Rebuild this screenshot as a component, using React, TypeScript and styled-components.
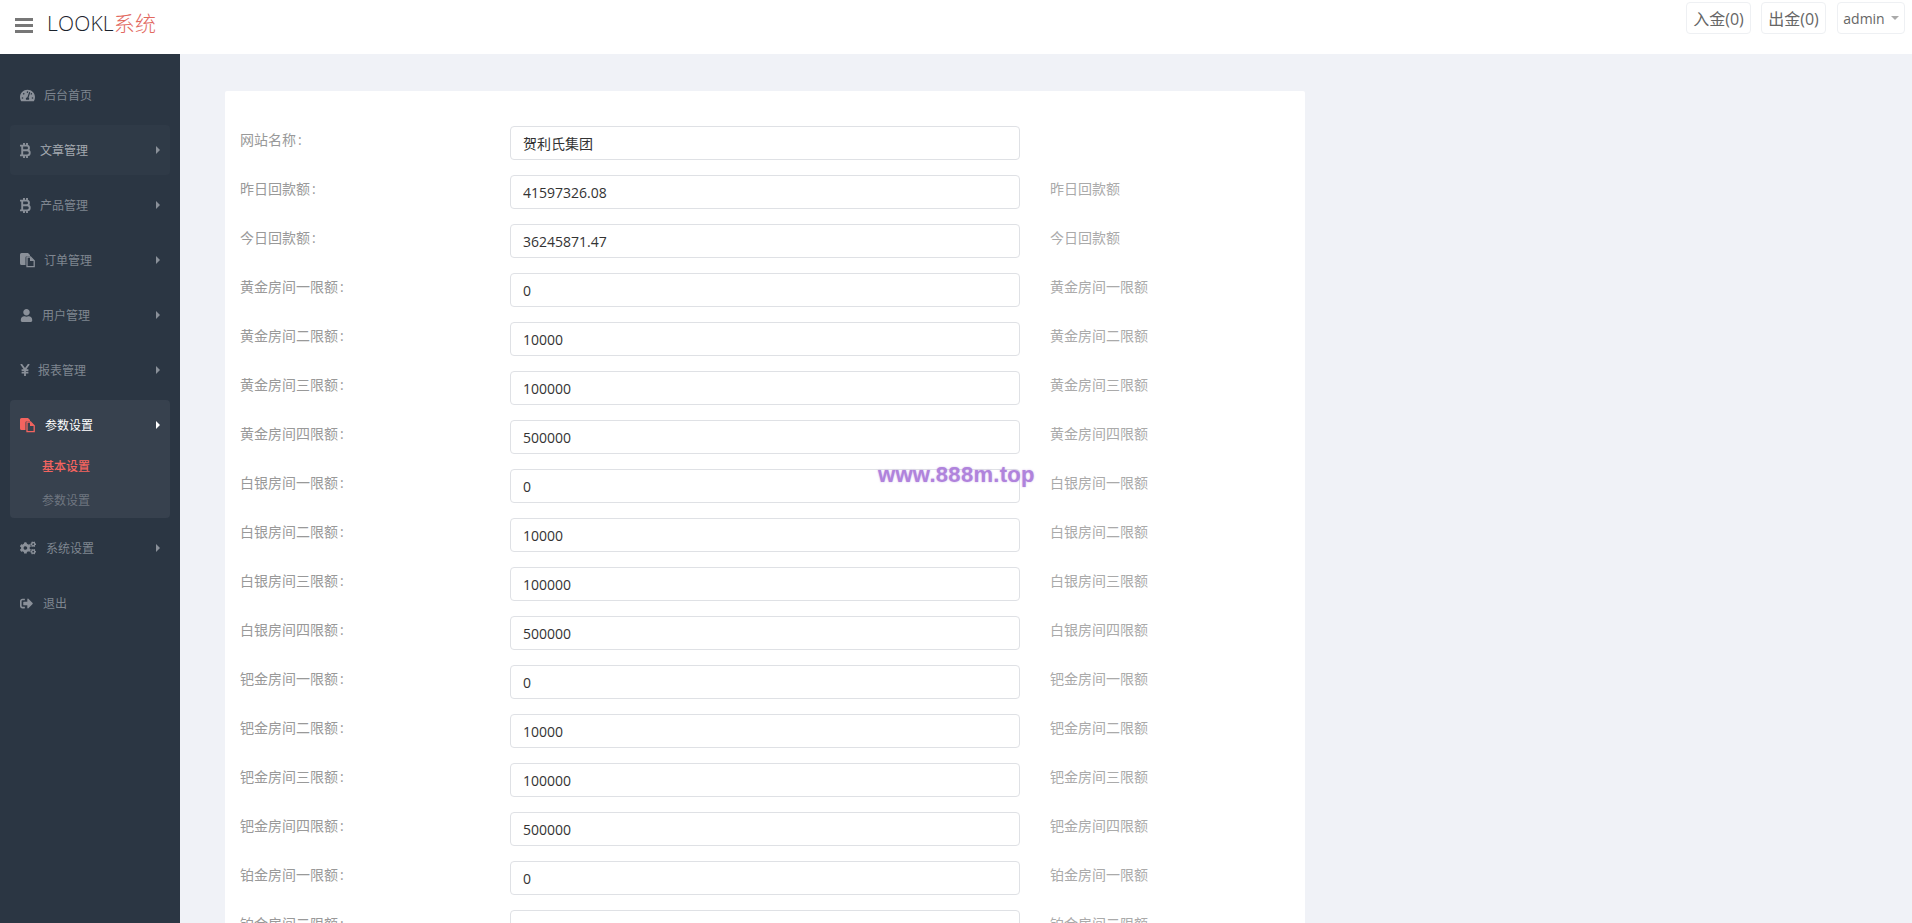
import React from 'react';
import styled, { createGlobalStyle } from 'styled-components';
import { FaCogs, FaSignOutAlt, FaTachometerAlt, FaUser } from 'react-icons/fa';

const GlobalStyle = createGlobalStyle`
  html, body {
    margin: 0;
    height: 100%;
    overflow: hidden;
  }
  body {
    font-family: "Open Sans", "Noto Sans CJK SC", sans-serif;
    background: #f0f2f7;
  }
`;

const Page = styled.div`
  position: relative;
  height: 100vh;
  display: flex;
  flex-direction: column;
  overflow: hidden;
`;

const Header = styled.header`
  flex: 0 0 54px;
  display: flex;
  align-items: flex-start;
  justify-content: space-between;
  background: #fff;
`;

const Brand = styled.div`
  display: flex;
  align-items: center;
  height: 44px;
  padding-left: 15px;
`;

const Burger = styled.svg`
  width: 18px;
  height: 15px;
  margin-right: 14px;
  margin-top: 6px;
`;

const Logo = styled.div`
  font-size: 21px;
  font-weight: 300;
  letter-spacing: 0.2px;
  color: #1a222c;
  span {
    color: #e2695f;
  }
`;

const HeaderActions = styled.div`
  display: flex;
  gap: 10px;
  padding: 2px 7px 0 0;
`;

const HeaderButton = styled.div`
  box-sizing: border-box;
  height: 32px;
  min-width: 65px;
  padding: 0 5px;
  display: flex;
  align-items: center;
  justify-content: center;
  gap: 6px;
  border: 1px solid #eef0f3;
  border-radius: 4px;
  font-size: 16px;
  color: #666;
`;

const AdminButton = styled(HeaderButton)`
  font-size: 14px;
  min-width: 68px;
  margin-left: 1px;
  &::after {
    content: '';
    border-left: 4px solid transparent;
    border-right: 4px solid transparent;
    border-top: 4px solid #aaa;
  }
`;

const Body = styled.div`
  flex: 1;
  min-height: 0;
  display: flex;
`;

const Sidebar = styled.nav`
  flex: 0 0 180px;
  box-sizing: border-box;
  padding: 16px 10px 0;
  background: #2b3643;
`;

const Group = styled.div<{ $open?: boolean; $hover?: boolean }>`
  margin-bottom: 5px;
  border-radius: 4px;
  background: ${(p) => (p.$open ? '#37414e' : p.$hover ? '#2f3a47' : 'transparent')};
`;

const NavItem = styled.div<{ $active?: boolean; $bright?: boolean }>`
  height: 50px;
  display: flex;
  align-items: center;
  padding: 0 10px;
  font-size: 12px;
  color: ${(p) => (p.$active ? '#fff' : p.$bright ? '#a4a9b0' : '#7f8690')};
`;

const NavIcon = styled.span<{ $active?: boolean; $gap: number; $width: number }>`
  display: flex;
  flex: 0 0 ${(p) => p.$width}px;
  min-width: 0;
  margin-right: ${(p) => p.$gap}px;
  color: ${(p) => (p.$active ? '#f4645f' : '#8a9099')};
  svg {
    width: 100%;
    height: auto;
  }
`;

const Arrow = styled.span<{ $active?: boolean }>`
  margin-left: auto;
  border-top: 4px solid transparent;
  border-bottom: 4px solid transparent;
  border-left: 4px solid ${(p) => (p.$active ? '#fff' : '#8a9099')};
`;

const SubMenu = styled.div`
  height: 68px;
  padding-left: 32px;
`;

const SubItem = styled.div<{ $active?: boolean }>`
  height: 34px;
  line-height: 34px;
  font-size: 12px;
  color: ${(p) => (p.$active ? '#f4645f' : '#6f7680')};
  font-weight: ${(p) => (p.$active ? 500 : 400)};
`;

const Main = styled.main`
  flex: 1;
  min-width: 0;
  padding: 37px 0 0 45px;
`;

const Card = styled.form`
  box-sizing: border-box;
  width: 1080px;
  padding: 35px 15px 0;
  background: #fff;
  border-radius: 2px;
`;

const Row = styled.div`
  display: flex;
  height: 34px;
  margin-bottom: 15px;
`;

const Label = styled.label`
  flex: 0 0 270px;
  padding-top: 4px;
  line-height: 20px;
  font-size: 14px;
  color: #999;
  &::after {
    content: ':';
    margin-left: 2px;
  }
`;

const Field = styled.input`
  box-sizing: border-box;
  flex: 0 0 510px;
  height: 34px;
  padding: 0 12px;
  border: 1px solid #dfe1e5;
  border-radius: 4px;
  font-family: inherit;
  font-size: 14px;
  color: #333;
  outline: none;
`;

const Help = styled.span`
  margin-left: 30px;
  padding-top: 4px;
  line-height: 20px;
  font-size: 14px;
  color: #aaa;
`;

const Watermark = styled.div`
  position: absolute;
  left: 878px;
  top: 462px;
  font-family: "Liberation Sans", sans-serif;
  font-size: 22px;
  font-weight: 700;
  letter-spacing: 0.3px;
  color: #b083dc;
  text-shadow: 0 0 2px rgba(176, 131, 220, 0.6);
`;

const BitcoinIcon = () => (
  <svg viewBox="0 0 11 15">
    <path
      d="M0 2.6h6.6a2.3 2.3 0 0 1 0 4.7H2.2M2.2 7.3h5a2.5 2.5 0 0 1 0 5.1H0M2.2 2.6v9.8M4 0v2.6M7 0v2.6M4 12.4V15M7 12.4V15"
      fill="none"
      stroke="currentColor"
      strokeWidth="1.9"
    />
  </svg>
);

const FilesIcon = () => (
  <svg viewBox="0 0 15 15">
    <path d="M0 1.5Q0 0 1.5 0H8l2 2v1H7Q5.5 3 5.5 4.5V12H1.5Q0 12 0 10.5Z" fill="currentColor" />
    <path d="M7 4h3.5L14.2 7.7V13.6H7Z" fill="none" stroke="currentColor" strokeWidth="1.3" />
    <path d="M10 4v4h4.5z" fill="currentColor" />
  </svg>
);

const YenIcon = () => (
  <svg viewBox="0 0 10 12">
    <path
      d="M1 0l4 5.6L9 0M5 5.6V12M1.6 6.2h6.8M1.6 8.6h6.8"
      fill="none"
      stroke="currentColor"
      strokeWidth="1.8"
    />
  </svg>
);

type MenuEntry = {
  name: string;
  icon: React.ReactNode;
  width: number;
  gap: number;
  arrow?: boolean;
  hover?: boolean;
};

const menu: MenuEntry[] = [
  { name: '后台首页', icon: <FaTachometerAlt />, width: 15, gap: 9 },
  { name: '文章管理', icon: <BitcoinIcon />, width: 11, gap: 9, arrow: true, hover: true },
  { name: '产品管理', icon: <BitcoinIcon />, width: 11, gap: 9, arrow: true },
  { name: '订单管理', icon: <FilesIcon />, width: 15, gap: 9, arrow: true },
  { name: '用户管理', icon: <FaUser />, width: 13, gap: 9, arrow: true },
  { name: '报表管理', icon: <YenIcon />, width: 10, gap: 8, arrow: true },
];

const tiers = ['黄金', '白银', '钯金', '铂金'];
const ranks = ['一', '二', '三', '四'];
const limits = ['0', '10000', '100000', '500000'];

const fields = [
  { label: '昨日回款额', value: '41597326.08' },
  { label: '今日回款额', value: '36245871.47' },
  ...tiers.flatMap((tier) =>
    ranks.map((rank, i) => ({ label: `${tier}房间${rank}限额`, value: limits[i] }))
  ),
];

const App: React.FC = () => {
  return (
    <Page>
      <GlobalStyle />
      <Header>
        <Brand>
          <Burger viewBox="0 0 18 15">
            <path d="M0 0h18v3H0zM0 6h18v3H0zM0 12h18v3H0z" fill="#777" />
          </Burger>
          <Logo>
            LOOKL<span>系统</span>
          </Logo>
        </Brand>
        <HeaderActions>
          <HeaderButton>入金(0)</HeaderButton>
          <HeaderButton>出金(0)</HeaderButton>
          <AdminButton>admin</AdminButton>
        </HeaderActions>
      </Header>
      <Body>
        <Sidebar>
          {menu.map((item) => (
            <Group key={item.name} $hover={item.hover}>
              <NavItem $bright={item.hover}>
                <NavIcon $width={item.width} $gap={item.gap}>
                  {item.icon}
                </NavIcon>
                {item.name}
                {item.arrow ? <Arrow /> : null}
              </NavItem>
            </Group>
          ))}
          <Group $open>
            <NavItem $active>
              <NavIcon $active $width={15} $gap={10}>
                <FilesIcon />
              </NavIcon>
              参数设置
              <Arrow $active />
            </NavItem>
            <SubMenu>
              <SubItem $active>基本设置</SubItem>
              <SubItem>参数设置</SubItem>
            </SubMenu>
          </Group>
          <Group>
            <NavItem>
              <NavIcon $width={16} $gap={10}>
                <FaCogs />
              </NavIcon>
              系统设置
              <Arrow />
            </NavItem>
          </Group>
          <Group>
            <NavItem>
              <NavIcon $width={13} $gap={10}>
                <FaSignOutAlt />
              </NavIcon>
              退出
            </NavItem>
          </Group>
        </Sidebar>
        <Main>
          <Card>
            <Row>
              <Label>网站名称</Label>
              <Field readOnly value="贺利氏集团" />
            </Row>
            {fields.map((field) => (
              <Row key={field.label}>
                <Label>{field.label}</Label>
                <Field readOnly value={field.value} />
                <Help>{field.label}</Help>
              </Row>
            ))}
          </Card>
        </Main>
      </Body>
      <Watermark>www.888m.top</Watermark>
    </Page>
  );
};

export default App;
